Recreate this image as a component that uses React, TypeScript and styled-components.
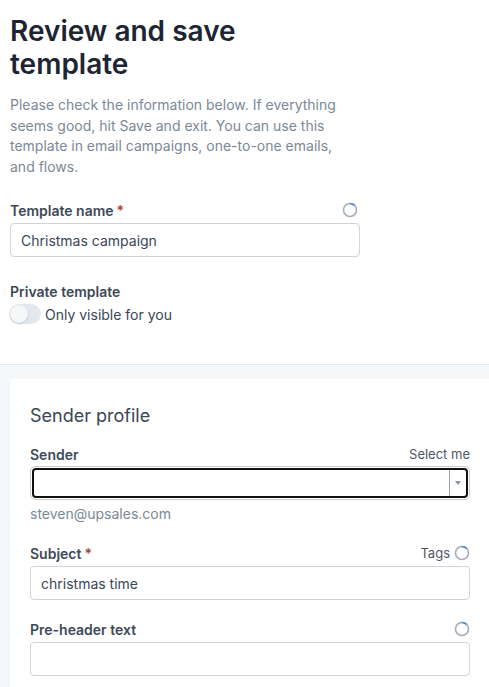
import React from "react";
import styled, { createGlobalStyle } from "styled-components";

const Global = createGlobalStyle`
  html, body { margin: 0; padding: 0; background: #ffffff; }
  body { font-family: Inter, "Noto Sans", sans-serif; color: #3a4656; }
  * { box-sizing: border-box; }
`;

const Page = styled.div`
  width: 489px;
  min-height: 687px;
  overflow: hidden;
  display: flex;
  flex-direction: column;
`;

const Top = styled.section`
  padding: 15px 10px 0 10px;
  height: 365px;
  border-bottom: 1px solid #e3e7ec;
  background: #fff;
`;

const Column = styled.div`
  width: 350px;
  display: flex;
  flex-direction: column;
`;

const Title = styled.h1`
  margin: 0;
  font-size: 28px;
  line-height: 33px;
  font-weight: 600;
  color: #1d2533;
`;

const Desc = styled.p`
  margin: 14px 0 0 0;
  font-size: 14px;
  line-height: 20.5px;
  color: #7b8896;
`;

const LabelRow = styled.div<{ $mt: number }>`
  margin-top: ${(p) => p.$mt}px;
  display: flex;
  align-items: center;
  justify-content: space-between;
  height: 20px;
`;

const Label = styled.span`
  font-size: 14px;
  font-weight: 600;
  color: #3d4957;
`;

const Req = styled.span`
  color: #b33a3a;
  margin-left: 3px;
`;

const Side = styled.span`
  display: flex;
  align-items: center;
  gap: 4px;
  font-size: 13px;
  color: #4c5866;
`;

const Input = styled.div`
  margin-top: 3px;
  height: 34px;
  border: 1px solid #cfd5dc;
  border-radius: 4px;
  padding: 0 10px;
  display: flex;
  align-items: center;
  font-size: 14px;
  color: #3a4656;
  background: #fff;
`;

const ToggleRow = styled.div`
  margin-top: 3px;
  display: flex;
  align-items: center;
  gap: 4px;
  margin-left: -1px;
  font-size: 14px;
  color: #3a4656;
`;

const Toggle = styled.span`
  width: 32px;
  height: 20px;
  border-radius: 10px;
  background: #e3e8ee;
  position: relative;
  display: inline-block;
  &::after {
    content: "";
    position: absolute;
    left: 1px;
    top: 1px;
    width: 18px;
    height: 18px;
    border-radius: 50%;
    background: #f5f7f9;
    box-shadow: 0 1px 2px rgba(0, 0, 0, 0.15);
  }
`;

const Lower = styled.section`
  flex: 1;
  background: #f5f8fa;
  padding: 14px 0 0 10px;
  display: flex;
`;

const Card = styled.div`
  flex: 1;
  background: #fff;
  padding: 25px 19px 20px 20px;
  display: flex;
  flex-direction: column;
`;

const CardTitle = styled.h2`
  margin: 0;
  font-size: 18px;
  line-height: 24px;
  font-weight: 400;
  color: #3a4656;
`;

const Select = styled.div`
  margin-top: 2px;
  height: 34px;
  border: 1px solid #c7cdd4;
  border-radius: 5px;
  padding: 1px;
`;

const SelectInner = styled.div`
  height: 100%;
  border: 2px solid #111;
  border-radius: 4px;
  display: flex;
  justify-content: flex-end;
`;

const Arrow = styled.div`
  width: 17px;
  border-left: 1px solid #9aa3ad;
  display: flex;
  align-items: center;
  justify-content: center;
  &::after {
    content: "";
    border-left: 3px solid transparent;
    border-right: 3px solid transparent;
    border-top: 4px solid #8a939c;
  }
`;

const Email = styled.div`
  margin-top: 4px;
  font-size: 14px;
  line-height: 20px;
  color: #7b8896;
`;

const Spinner = () => (
  <svg width="16" height="16" viewBox="0 0 16 16">
    <circle cx="8" cy="8" r="6.5" fill="none" stroke="#a3aeba" strokeWidth="1.6" />
    <path d="M8 1.5 A6.5 6.5 0 0 1 12.6 3.4" fill="none" stroke="#4a8ad6" strokeWidth="1.6" />
  </svg>
);

export default function App() {
  return (
    <Page>
      <Global />
      <Top>
        <Column>
          <Title>
            Review and save
            <br />
            template
          </Title>
          <Desc>
            Please check the information below. If everything seems good, hit Save and exit. You can use this template in
            email campaigns, one-to-one emails, and flows.
          </Desc>
          <LabelRow $mt={23}>
            <Label>
              Template name<Req>*</Req>
            </Label>
            <Side style={{ marginRight: 2 }}>
              <Spinner />
            </Side>
          </LabelRow>
          <Input>Christmas campaign</Input>
          <LabelRow $mt={24}>
            <Label>Private template</Label>
          </LabelRow>
          <ToggleRow>
            <Toggle />
            Only visible for you
          </ToggleRow>
        </Column>
      </Top>
      <Lower>
        <Card>
          <CardTitle>Sender profile</CardTitle>
          <LabelRow $mt={16}>
            <Label>Sender</Label>
            <Side>Select me</Side>
          </LabelRow>
          <Select>
            <SelectInner>
              <Arrow />
            </SelectInner>
          </Select>
          <Email>steven@upsales.com</Email>
          <LabelRow $mt={19}>
            <Label>
              Subject<Req>*</Req>
            </Label>
            <Side>
              Tags <Spinner />
            </Side>
          </LabelRow>
          <Input>christmas time</Input>
          <LabelRow $mt={19}>
            <Label>Pre-header text</Label>
            <Side>
              <Spinner />
            </Side>
          </LabelRow>
          <Input />
        </Card>
      </Lower>
    </Page>
  );
}
